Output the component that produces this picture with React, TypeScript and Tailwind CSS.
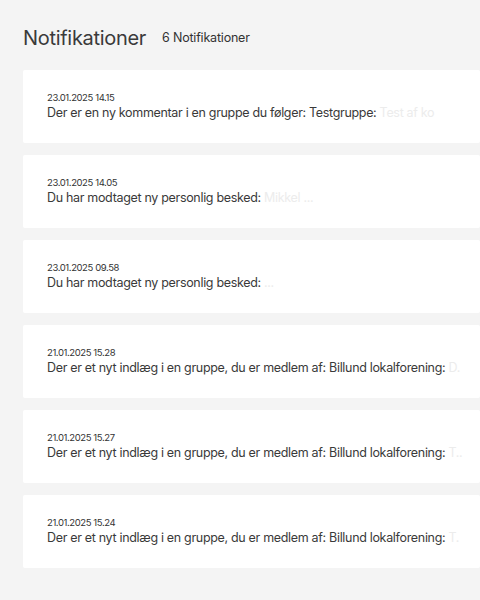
import React from "react";

const items = [
  { date: "23.01.2025 14.15", text: "Der er en ny kommentar i en gruppe du følger: Testgruppe:", tail: "Test af ko" },
  { date: "23.01.2025 14.05", text: "Du har modtaget ny personlig besked:", tail: "Mikkel ..." },
  { date: "23.01.2025 09.58", text: "Du har modtaget ny personlig besked:", tail: "..." },
  { date: "21.01.2025 15.28", text: "Der er et nyt indlæg i en gruppe, du er medlem af: Billund lokalforening:", tail: "D." },
  { date: "21.01.2025 15.27", text: "Der er et nyt indlæg i en gruppe, du er medlem af: Billund lokalforening:", tail: "T.." },
  { date: "21.01.2025 15.24", text: "Der er et nyt indlæg i en gruppe, du er medlem af: Billund lokalforening:", tail: "T." },
];

export default function App() {
  return (
    <div
      className="w-[480px] h-[600px] overflow-hidden bg-[#f4f4f4] pl-[23px]"
      style={{ fontFamily: "Inter, 'Noto Sans', sans-serif" }}
    >
      <div className="flex items-center pt-[26px] h-[50px] gap-[16px]">
        <h1 className="text-[20px] leading-[24px] text-[#3a3a3a] font-normal tracking-[-0.3px]">Notifikationer</h1>
        <span className="text-[12.5px] leading-[24px] text-[#333] tracking-[-0.2px]">6 Notifikationer</span>
      </div>
      <div className="flex flex-col gap-[12px] mt-[20px]">
        {items.map((it, i) => (
          <div key={i} className="h-[73px] bg-white rounded-[2px] flex flex-col justify-center pl-[24px] whitespace-nowrap overflow-hidden">
            <div className="text-[9.5px] leading-[12px] text-[#333] tracking-[-0.4px]">{it.date}</div>
            <div className="text-[12.5px] leading-[18px] text-[#3a3a3a] tracking-[-0.32px]">
              {it.text} <span className="text-[#ececec]">{it.tail}</span>
            </div>
          </div>
        ))}
      </div>
    </div>
  );
}
